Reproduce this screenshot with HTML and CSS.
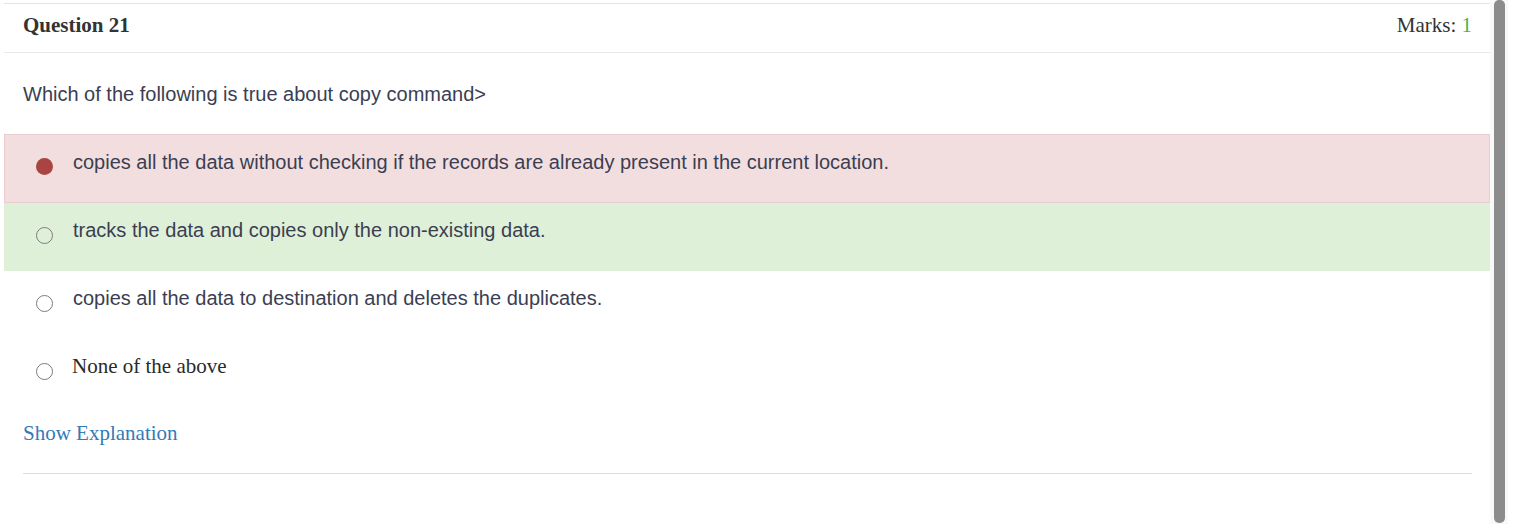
FILE: index.html
```html
<!DOCTYPE html>
<html>
<head>
<meta charset="utf-8">
<link rel="stylesheet" href="styles.css">
</head>
<body>
<div class="page">
  <div class="main">
    <div class="card">
      <div class="card-head">
        <span class="q-title">Question 21</span>
        <span class="marks">Marks: <span class="marks-num">1</span></span>
      </div>
      <div class="q-text">Which of the following is true about copy command&gt;</div>
      <div class="options">
        <div class="opt opt-wrong">
          <span class="radio radio-filled"></span>
          <span class="opt-text sans">copies all the data without checking if the records are already present in the current location.</span>
        </div>
        <div class="opt opt-right">
          <span class="radio"></span>
          <span class="opt-text sans">tracks the data and copies only the non-existing data.</span>
        </div>
        <div class="opt">
          <span class="radio"></span>
          <span class="opt-text sans">copies all the data to destination and deletes the duplicates.</span>
        </div>
        <div class="opt">
          <span class="radio"></span>
          <span class="opt-text serif">None of the above</span>
        </div>
      </div>
      <div class="explain"><a class="explain-link" href="#">Show Explanation</a></div>
      <div class="foot-rule"></div>
    </div>
  </div>
  <div class="scroll-track"><div class="scroll-thumb"></div></div>
</div>
</body>
</html>
```

FILE: styles.css
```css
html, body {
  margin: 0;
  padding: 0;
  background: #ffffff;
}
.page {
  display: flex;
  width: 1526px;
  height: 527px;
  overflow: hidden;
}
.main {
  width: 1490px;
  padding-top: 3px;
  box-sizing: border-box;
}
.card {
  margin-left: 4px;
  border-top: 1px solid #e3e3e3;
}
.card-head {
  display: flex;
  justify-content: space-between;
  align-items: flex-start;
  height: 49px;
  box-sizing: border-box;
  padding: 9px 18px 0 19px;
  border-bottom: 1px solid #e9e9e9;
  font-family: "Liberation Serif", "Times New Roman", serif;
  font-size: 21px;
  line-height: 24px;
  color: #333333;
}
.q-title {
  font-weight: bold;
}
.marks-num {
  color: #4caf50;
}
.q-text {
  font-family: "Liberation Sans", Arial, sans-serif;
  font-size: 20px;
  line-height: 24px;
  color: #3b3e52;
  padding: 29px 0 28px 19px;
}
.options {
  display: flex;
  flex-direction: column;
}
.opt {
  display: flex;
  align-items: flex-start;
  height: 68px;
  box-sizing: border-box;
  padding: 14px 0 0 31px;
  border: 1px solid transparent;
}
.opt-wrong {
  height: 69px;
  padding-top: 15px;
  background: #f2dede;
  border-color: #ebccd1;
}
.opt-wrong .radio {
  margin-top: 8px;
}
.opt-right {
  background: #dff0d8;
  border-color: #dff0d8;
}
.radio {
  flex: none;
  width: 17px;
  height: 17px;
  box-sizing: border-box;
  border: 1.5px solid #7b7b7b;
  border-radius: 50%;
  margin-top: 9px;
  margin-right: 20px;
}
.radio-filled {
  border: none;
  background: #a94442;
}
.opt-text {
  color: #3b3e52;
  line-height: 24px;
}
.sans {
  font-family: "Liberation Sans", Arial, sans-serif;
  font-size: 20px;
}
.serif {
  font-family: "Liberation Serif", "Times New Roman", serif;
  font-size: 21px;
  color: #2b2b2b;
  margin-left: -1px;
}
.explain {
  padding: 14px 0 26px 19px;
  line-height: 24px;
}
.explain-link {
  font-family: "Liberation Serif", "Times New Roman", serif;
  font-size: 21px;
  color: #337ab7;
  text-decoration: none;
}
.foot-rule {
  margin-left: 19px;
  width: 1449px;
  border-top: 1px solid #dddddd;
}
.scroll-track {
  width: 18px;
  height: 524px;
  background: #f9f9f9;
  display: flex;
  justify-content: center;
}
.scroll-thumb {
  width: 11px;
  height: 523px;
  background: #8c8c8c;
  border-radius: 5px;
}
```
